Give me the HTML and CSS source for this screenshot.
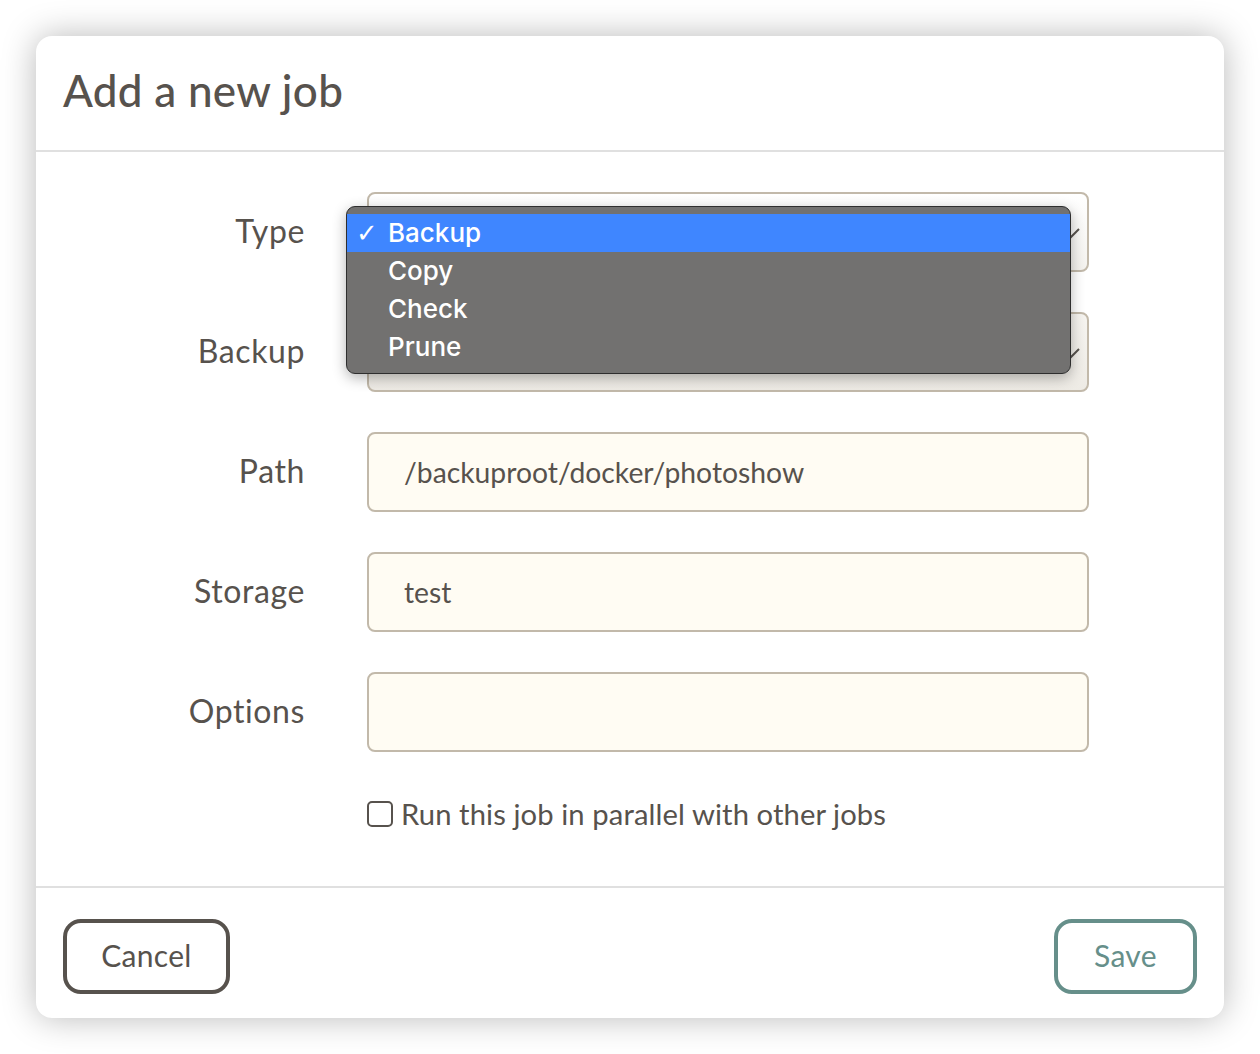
FILE: index.html
```html
<!DOCTYPE html>
<html lang="en">
<head>
<meta charset="utf-8">
<title>Add a new job</title>
<link rel="stylesheet" href="styles.css">
</head>
<body>
<div class="modal">
  <div class="modal-header">
    <h1 class="title">Add a new job</h1>
  </div>
  <div class="modal-body">
    <div class="form">
      <label class="label">Type</label>
      <div class="field select">
        <svg class="chevron" width="20" height="12" viewBox="0 0 20 12"><path d="M2 2 L10 10 L18 2" fill="none" stroke="#57524d" stroke-width="2"/></svg>
        <div class="popup">
          <div class="opt selected"><span class="tick">✓</span>Backup</div>
          <div class="opt">Copy</div>
          <div class="opt">Check</div>
          <div class="opt">Prune</div>
        </div>
      </div>
      <label class="label">Backup</label>
      <div class="field select alt">
        <svg class="chevron" width="20" height="12" viewBox="0 0 20 12"><path d="M2 2 L10 10 L18 2" fill="none" stroke="#57524d" stroke-width="2"/></svg>
      </div>
      <label class="label">Path</label>
      <div class="field input"><span class="value">/backuproot/docker/photoshow</span></div>
      <label class="label">Storage</label>
      <div class="field input"><span class="value">test</span></div>
      <label class="label">Options</label>
      <div class="field input"><span class="value"></span></div>
      <span></span>
      <label class="check"><span class="box"></span>Run this job in parallel with other jobs</label>
    </div>
  </div>
  <div class="modal-footer">
    <button class="btn btn-cancel">Cancel</button>
    <button class="btn btn-save">Save</button>
  </div>
</div>
</body>
</html>
```

FILE: styles.css
```css
html, body {
  margin: 0;
  padding: 0;
  background: #ffffff;
}
body {
  font-family: Lato, "Noto Sans", sans-serif;
  color: #57524d;
  padding: 36px;
}
.modal {
  width: 1188px;
  height: 982px;
  background: #fff;
  border-radius: 16px;
  box-shadow: 0 0 34px rgba(0,0,0,0.28);
  display: flex;
  flex-direction: column;
}
.modal-header {
  height: 114px;
  box-sizing: content-box;
  border-bottom: 2px solid #e0e0e0;
  display: flex;
  align-items: center;
  padding: 0 27px;
}
.title {
  margin: 0;
  font-size: 44px;
  font-weight: 500;
  color: #57524d;
  letter-spacing: 0.3px;
  line-height: 1;
  padding-bottom: 6px;
}
.modal-body {
  height: 736px;
  box-sizing: border-box;
  padding-top: 40px;
  border-bottom: 2px solid #e0e0e0;
}
.form {
  display: grid;
  grid-template-columns: 269px 722px;
  column-gap: 62px;
  row-gap: 40px;
  align-items: center;
}
.label {
  text-align: right;
  font-size: 32px;
  letter-spacing: 0.6px;
  color: #57524d;
  padding-bottom: 4px;
}
.field {
  position: relative;
  height: 80px;
  box-sizing: border-box;
  border: 2px solid #c2b9aa;
  border-radius: 8px;
  display: flex;
  align-items: center;
  padding-left: 35px;
  font-size: 28.3px;
  color: #57524d;
}
.input {
  background: #fffcf3;
}
.select {
  background: linear-gradient(#ffffff, #f4f2ee);
}
.select.alt {
  background: linear-gradient(#f6f4f0, #eeebe5);
}
.chevron {
  position: absolute;
  right: 6px;
  top: 33px;
}
.popup {
  position: absolute;
  left: -23px;
  top: 12px;
  width: 725px;
  height: 168px;
  box-sizing: border-box;
  background: #727170;
  border: 1px solid #2e2e2e;
  border-radius: 9px;
  padding-top: 7px;
  box-shadow: 0 4px 14px rgba(0,0,0,0.3);
  z-index: 5;
  font-family: Inter, "Noto Sans", sans-serif;
  font-weight: 500;
  font-size: 26px;
  color: #fff;
}
.opt {
  height: 38px;
  line-height: 38px;
  padding-left: 41px;
  position: relative;
}
.opt.selected {
  background: #3f86ff;
}
.tick {
  position: absolute;
  left: 9px;
  top: 0;
  font-family: "DejaVu Sans", sans-serif;
  font-size: 26px;
  font-weight: 400;
}
.check {
  display: flex;
  align-items: center;
  gap: 8px;
  font-size: 29.2px;
  letter-spacing: 0.1px;
  margin-top: 4px;
}
.box {
  width: 22px;
  height: 22px;
  border: 2px solid #57524d;
  border-radius: 5px;
  display: inline-block;
  flex: none;
}
.modal-footer {
  flex: 1;
  display: flex;
  justify-content: space-between;
  align-items: flex-start;
  padding: 31px 27px 0;
}
.btn {
  height: 75px;
  background: #fff;
  border-radius: 18px;
  border: 4px solid #57524d;
  font-family: Lato, "Noto Sans", sans-serif;
  font-size: 30px;
  letter-spacing: 0.3px;
  color: #57524d;
  padding: 0 0 3px;
}
.btn-cancel {
  width: 167px;
}
.btn-save {
  width: 143px;
  border-color: #668f8a;
  color: #668f8a;
}
```
